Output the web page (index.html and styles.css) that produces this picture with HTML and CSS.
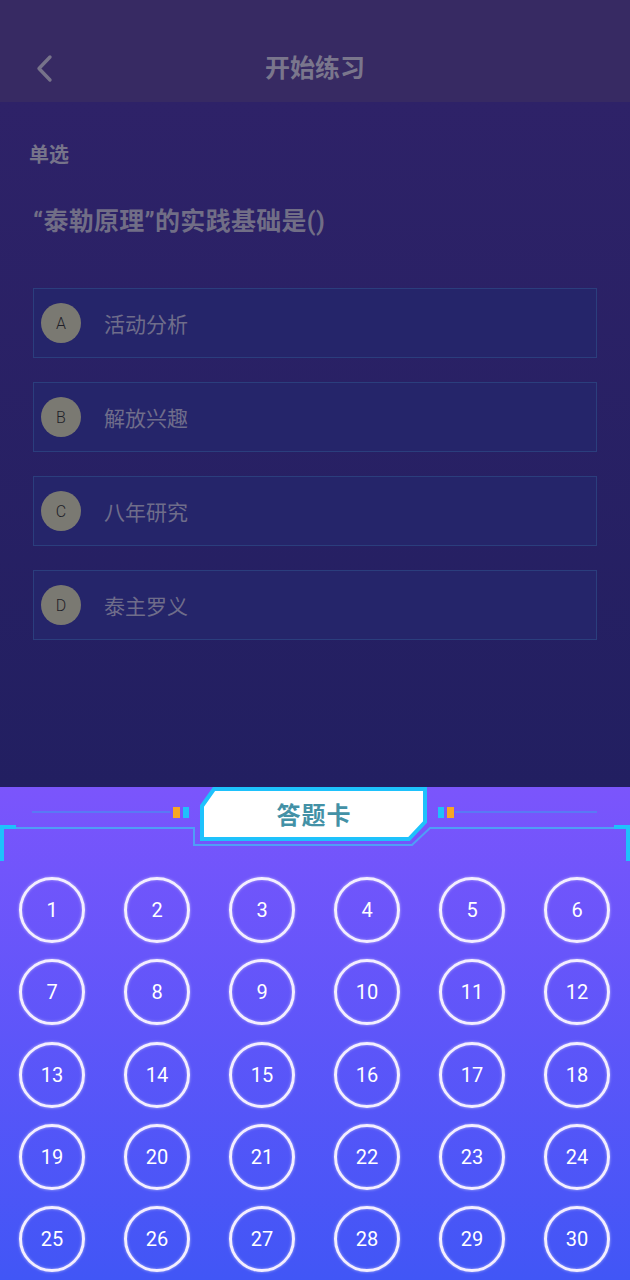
FILE: index.html
```html
<!DOCTYPE html>
<html lang="zh-CN">
<head>
<meta charset="utf-8">
<title>开始练习</title>
<link rel="stylesheet" href="styles.css">
</head>
<body>
<div class="page">
  <header class="topbar">
    <span class="back">
      <svg width="22" height="30" viewBox="0 0 22 30"><path d="M16 3 L5 14.5 L16 26" fill="none" stroke="#77738a" stroke-width="3.4" stroke-linecap="round" stroke-linejoin="round"/></svg>
    </span>
    <h1 class="title">开始练习</h1>
  </header>

  <main class="quiz">
    <div class="qtype">单选</div>
    <div class="question">“泰勒原理”的实践基础是()</div>
    <ul class="options">
      <li class="option"><span class="letter">A</span><span class="otext">活动分析</span></li>
      <li class="option"><span class="letter">B</span><span class="otext">解放兴趣</span></li>
      <li class="option"><span class="letter">C</span><span class="otext">八年研究</span></li>
      <li class="option"><span class="letter">D</span><span class="otext">泰主罗义</span></li>
    </ul>
  </main>

  <section class="sheet">
    <div class="sheet-head">
      <svg class="deco" width="630" height="90" viewBox="0 0 630 90">
        <line x1="32" y1="25" x2="170" y2="25" stroke="#4f86f3" stroke-width="1.6"/>
        <rect x="173" y="20" width="7" height="11" fill="#f7a623"/>
        <rect x="183" y="20" width="6" height="11" fill="#20c0fb"/>
        <rect x="438" y="20" width="6" height="11" fill="#20c0fb"/>
        <rect x="447" y="20" width="7" height="11" fill="#f7a623"/>
        <line x1="455" y1="25" x2="597" y2="25" stroke="#4f86f3" stroke-width="1.6"/>
        <path d="M0 41 H194 V58 H412 L430 41 H616" fill="none" stroke="#4f9ef6" stroke-width="2"/>
        <path d="M0 40 H16" stroke="#1ec2fc" stroke-width="4"/>
        <path d="M2 40 V74" stroke="#1ec2fc" stroke-width="4"/>
        <path d="M614 40 H630" stroke="#1ec2fc" stroke-width="4"/>
        <path d="M628 40 V74" stroke="#1ec2fc" stroke-width="4"/>
        <polygon points="214,2 425,2 425,35 409,52 202,52 202,19" fill="#ffffff" stroke="#1ec2fc" stroke-width="4" stroke-linejoin="miter"/>
      </svg>
      <div class="sheet-title">答题卡</div>
    </div>
    <div class="grid">
      <span class="num">1</span><span class="num">2</span><span class="num">3</span><span class="num">4</span><span class="num">5</span><span class="num">6</span>
      <span class="num">7</span><span class="num">8</span><span class="num">9</span><span class="num">10</span><span class="num">11</span><span class="num">12</span>
      <span class="num">13</span><span class="num">14</span><span class="num">15</span><span class="num">16</span><span class="num">17</span><span class="num">18</span>
      <span class="num">19</span><span class="num">20</span><span class="num">21</span><span class="num">22</span><span class="num">23</span><span class="num">24</span>
      <span class="num">25</span><span class="num">26</span><span class="num">27</span><span class="num">28</span><span class="num">29</span><span class="num">30</span>
    </div>
  </section>
</div>
</body>
</html>
```

FILE: styles.css
```css
* { box-sizing: border-box; }
html, body { margin: 0; padding: 0; }
body {
  width: 630px;
  height: 1280px;
  overflow: hidden;
  font-family: Roboto, "Noto Sans CJK SC", sans-serif;
  background: #221f60;
}
.page {
  display: flex;
  flex-direction: column;
  height: 1280px;
}

/* top bar */
.topbar {
  height: 102px;
  flex: none;
  background: #372a63;
  display: flex;
  align-items: center;
  justify-content: center;
  padding-top: 36px;
  position: relative;
}
.back {
  position: absolute;
  left: 34px;
  top: 54px;
  width: 22px;
  height: 30px;
  display: block;
}
.back svg { display: block; }
.title {
  margin: 0;
  font-size: 25px;
  font-weight: 700;
  color: #7a768c;
  line-height: 34px;
}

/* quiz body */
.quiz {
  flex: 1;
  background: linear-gradient(#2e2268, #221f61);
  padding: 41px 33px 0 33px;
}
.qtype {
  font-size: 20px;
  font-weight: 700;
  color: #77748a;
  line-height: 24px;
  margin-left: -4px;
}
.question {
  margin-top: 40px;
  font-size: 25px;
  font-weight: 700;
  color: #716e86;
  line-height: 30px;
  letter-spacing: 0.3px;
}
.options {
  list-style: none;
  margin: 51px 0 0 0;
  padding: 0;
  display: flex;
  flex-direction: column;
  gap: 24px;
  width: 564px;
}
.option {
  height: 70px;
  border: 1px solid #2b3e7d;
  background: #25256a;
  display: flex;
  align-items: center;
  padding-left: 7px;
}
.letter {
  width: 40px;
  height: 40px;
  border-radius: 50%;
  background: #7a7972;
  color: #1f1f28;
  font-size: 16px;
  font-weight: 300;
  display: flex;
  align-items: center;
  justify-content: center;
  flex: none;
}
.otext {
  margin-left: 23px;
  font-size: 21px;
  color: #6f6d8a;
}

/* answer sheet */
.sheet {
  height: 493px;
  flex: none;
  background: linear-gradient(#7b55fc, #4156f6);
}
.sheet-head {
  height: 90px;
  position: relative;
  display: flex;
  justify-content: center;
}
.deco {
  position: absolute;
  left: 0;
  top: 0;
  display: block;
}
.sheet-title {
  position: relative;
  height: 56px;
  line-height: 58px;
  font-size: 24px;
  font-weight: 700;
  color: #4391a6;
  padding-right: 2px;
  letter-spacing: 1px;
}
.grid {
  display: grid;
  grid-template-columns: repeat(6, 66px);
  grid-auto-rows: 66px;
  column-gap: 39px;
  row-gap: 16.3px;
  padding-left: 19px;
}
.num {
  width: 66px;
  height: 66px;
  border-radius: 50%;
  border: 3px solid #f3eeff;
  box-shadow: 0 0 3px rgba(255,255,255,0.55), inset 0 0 3px rgba(255,255,255,0.45);
  display: flex;
  align-items: center;
  justify-content: center;
  color: #ffffff;
  font-size: 20px;
}
```
